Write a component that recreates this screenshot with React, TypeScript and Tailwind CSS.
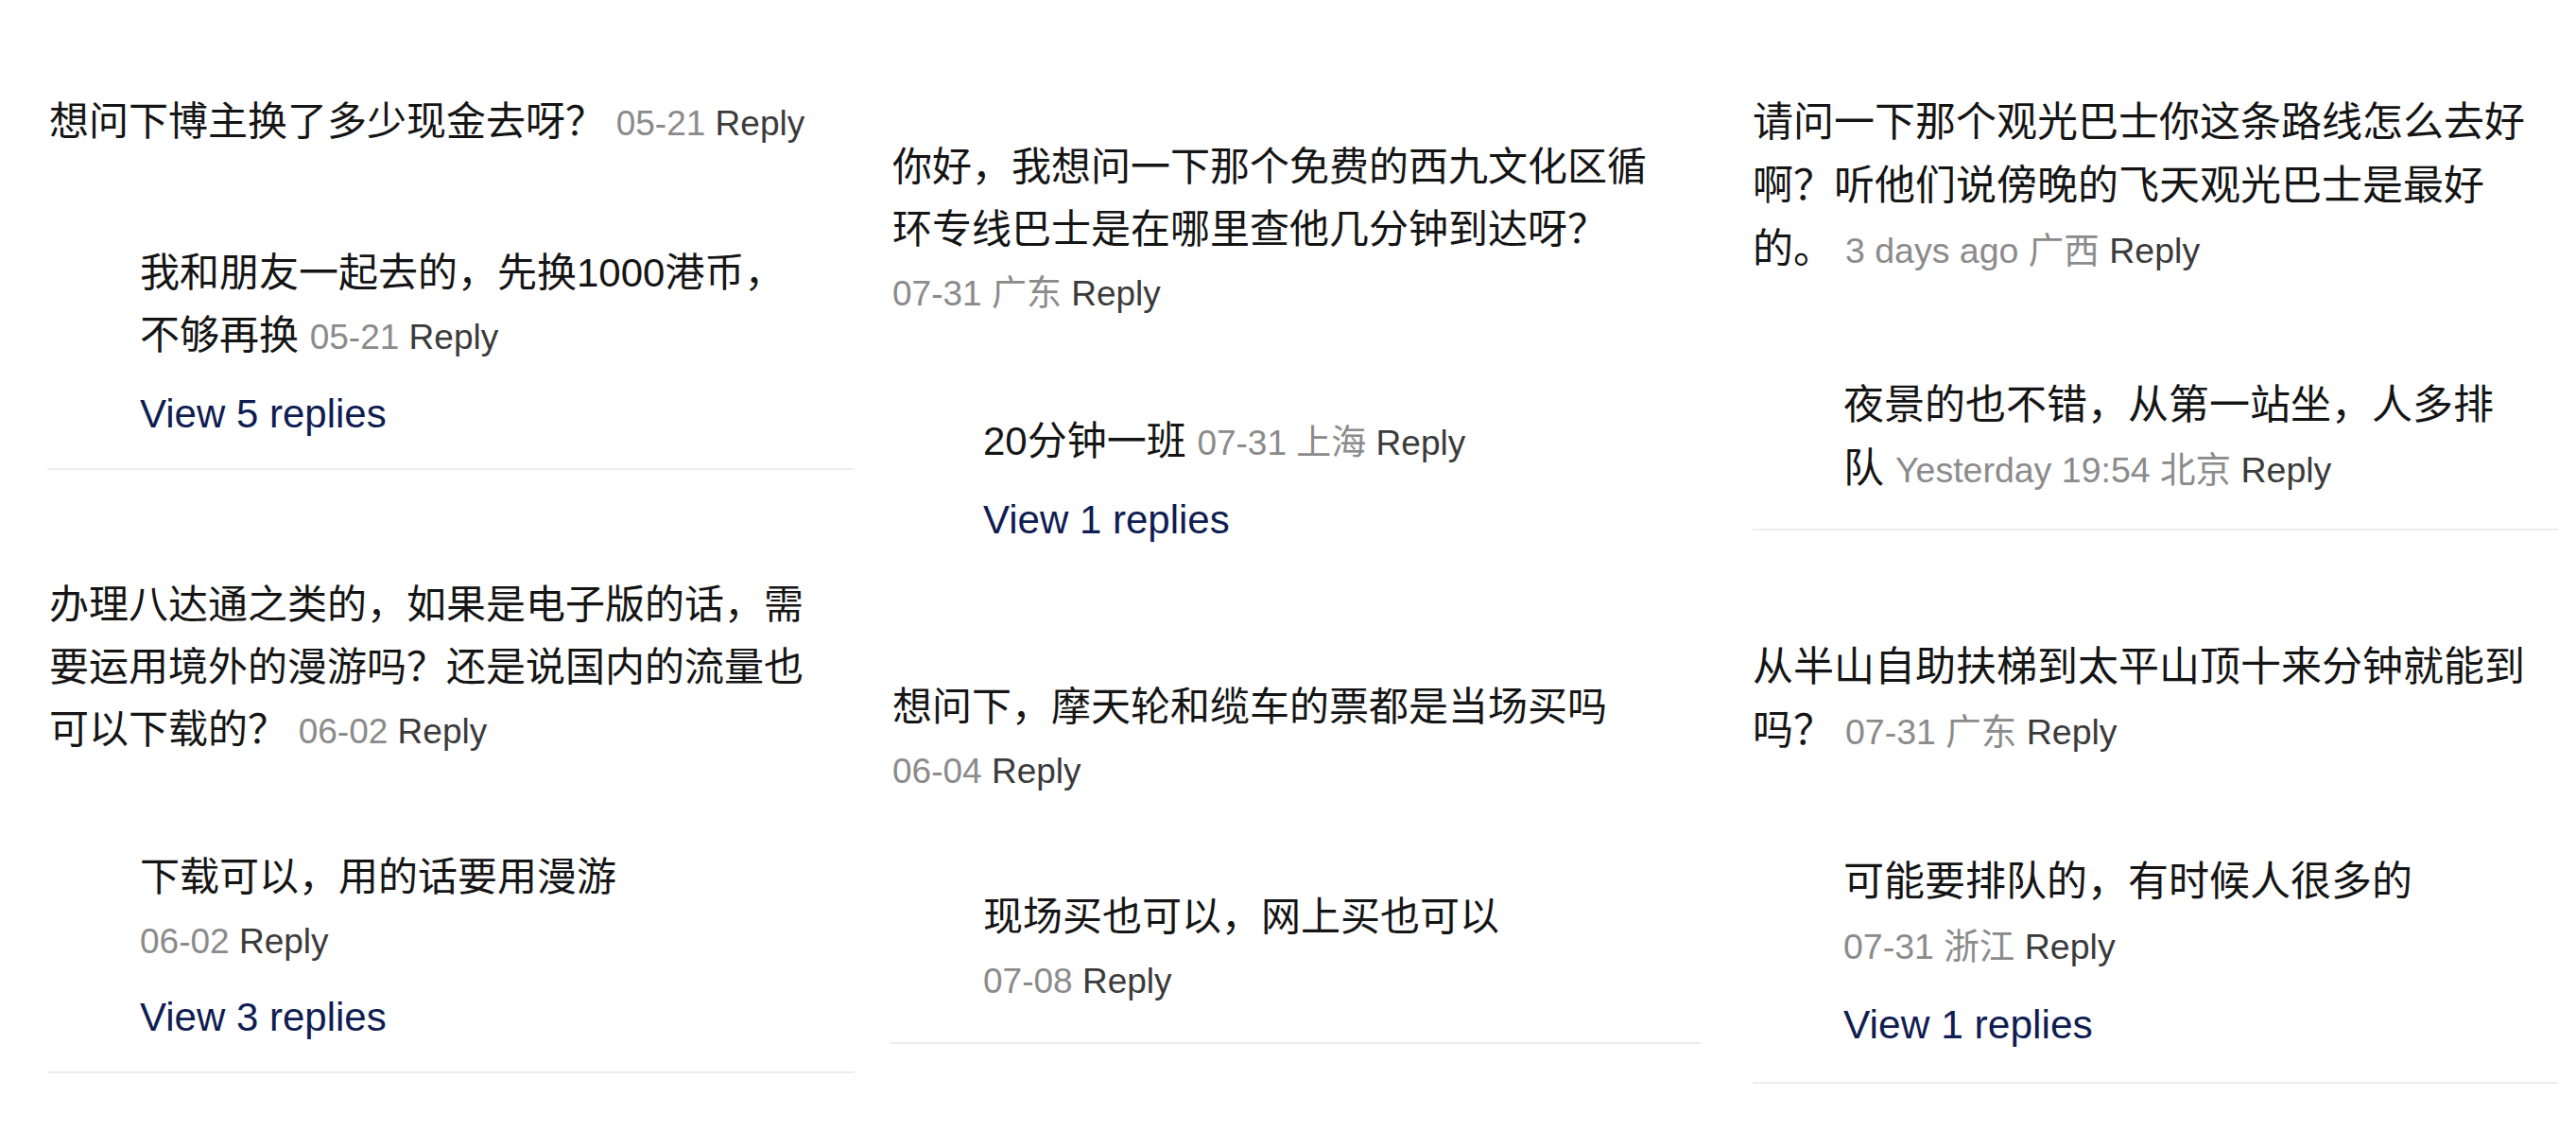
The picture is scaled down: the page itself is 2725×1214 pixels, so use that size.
import { Fragment } from "react";

type Entry = {
  lines: string[];
  date: string;
  loc?: string;
  metaOwnLine?: boolean;
};

type Thread = {
  className: string;
  comment: Entry;
  replyGap: string;
  reply: Entry;
  view?: string;
  viewGap?: string;
};

type Sizes = {
  text: string;
  meta: string;
  view: string;
};

type Column = {
  className: string;
  inset: string;
  sizes: Sizes;
  threads: Thread[];
};

const FONT = {
  fontFamily: '"Liberation Sans", "Noto Sans CJK SC", sans-serif',
};

const baseSizes: Sizes = {
  text: "text-[42px] leading-[66px]",
  meta: "text-[37px]",
  view: "text-[42px] leading-[56px]",
};

const columns: Column[] = [
  {
    className: "w-[854px]",
    inset: "pl-[2px]",
    sizes: baseSizes,
    threads: [
      {
        className: "mt-[96px] pb-[29px] border-b-2 border-[#ededed]",
        comment: { lines: ["想问下博主换了多少现金去呀？"], date: "05-21" },
        replyGap: "mt-[92px]",
        reply: {
          lines: ["我和朋友一起去的，先换1000港币，", "不够再换"],
          date: "05-21",
        },
        view: "View 5 replies",
        viewGap: "mt-[20px]",
      },
      {
        className: "mt-[110px] pb-[29px] border-b-2 border-[#ededed]",
        comment: {
          lines: [
            "办理八达通之类的，如果是电子版的话，需",
            "要运用境外的漫游吗？还是说国内的流量也",
            "可以下载的？",
          ],
          date: "06-02",
        },
        replyGap: "mt-[88px]",
        reply: {
          lines: ["下载可以，用的话要用漫游"],
          date: "06-02",
          metaOwnLine: true,
        },
        view: "View 3 replies",
        viewGap: "mt-[19px]",
      },
    ],
  },
  {
    className: "ml-[37px] w-[858px]",
    inset: "pl-[3px]",
    sizes: baseSizes,
    threads: [
      {
        className: "mt-[144px]",
        comment: {
          lines: [
            "你好，我想问一下那个免费的西九文化区循",
            "环专线巴士是在哪里查他几分钟到达呀？",
          ],
          date: "07-31",
          loc: "广东",
          metaOwnLine: true,
        },
        replyGap: "mt-[90px]",
        reply: { lines: ["20分钟一班"], date: "07-31", loc: "上海" },
        view: "View 1 replies",
        viewGap: "mt-[20px]",
      },
      {
        className: "mt-[137px] pb-[31px] border-b-2 border-[#ededed]",
        comment: {
          lines: ["想问下，摩天轮和缆车的票都是当场买吗"],
          date: "06-04",
          metaOwnLine: true,
        },
        replyGap: "mt-[88px]",
        reply: {
          lines: ["现场买也可以，网上买也可以"],
          date: "07-08",
          metaOwnLine: true,
        },
      },
    ],
  },
  {
    className: "ml-[55px] w-[852px]",
    inset: "pl-0",
    sizes: {
      text: "text-[43px] leading-[67px]",
      meta: "text-[37.5px]",
      view: "text-[42.5px] leading-[56px]",
    },
    threads: [
      {
        className: "mt-[96px] pb-[28px] border-b-2 border-[#ededed]",
        comment: {
          lines: [
            "请问一下那个观光巴士你这条路线怎么去好",
            "啊？听他们说傍晚的飞天观光巴士是最好",
            "的。",
          ],
          date: "3 days ago",
          loc: "广西",
        },
        replyGap: "mt-[96px]",
        reply: {
          lines: ["夜景的也不错，从第一站坐，人多排", "队"],
          date: "Yesterday 19:54",
          loc: "北京",
        },
      },
      {
        className: "mt-[111px] pb-[32px] border-b-2 border-[#ededed]",
        comment: {
          lines: ["从半山自助扶梯到太平山顶十来分钟就能到", "吗？"],
          date: "07-31",
          loc: "广东",
        },
        replyGap: "mt-[91px]",
        reply: {
          lines: ["可能要排队的，有时候人很多的"],
          date: "07-31",
          loc: "浙江",
          metaOwnLine: true,
        },
        view: "View 1 replies",
        viewGap: "mt-[21px]",
      },
    ],
  },
];

const Meta = ({ date, loc, size }: { date: string; loc?: string; size: string }) => (
  <span className={size}>
    <span className="text-[#8b8b8b]">{loc ? `${date} ${loc}` : date}</span>{" "}
    <span className="text-[#3b3b3b]">Reply</span>
  </span>
);

const Text = ({ data, sizes }: { data: Entry; sizes: Sizes }) => (
  <p className={`${sizes.text} text-[#151515] whitespace-nowrap`}>
    {data.lines.map((line, i) => (
      <Fragment key={i}>
        {i > 0 && <br />}
        {line}
      </Fragment>
    ))}
    {data.metaOwnLine ? <br /> : " "}
    <Meta date={data.date} loc={data.loc} size={sizes.meta} />
  </p>
);

const CommentThread = ({
  data,
  inset,
  sizes,
}: {
  data: Thread;
  inset: string;
  sizes: Sizes;
}) => (
  <div className={data.className}>
    <div className={inset}>
      <Text data={data.comment} sizes={sizes} />
      <div className={`ml-[96px] ${data.replyGap}`}>
        <Text data={data.reply} sizes={sizes} />
        {data.view && (
          <div className={`${sizes.view} text-[#101d52] ${data.viewGap}`}>
            {data.view}
          </div>
        )}
      </div>
    </div>
  </div>
);

export default function App() {
  return (
    <div style={FONT} className="flex w-[2725px] h-[1214px] bg-white pl-[50px] overflow-hidden">
      {columns.map((col, i) => (
        <div key={i} className={`flex flex-col shrink-0 ${col.className}`}>
          {col.threads.map((t, j) => (
            <CommentThread key={j} data={t} inset={col.inset} sizes={col.sizes} />
          ))}
        </div>
      ))}
    </div>
  );
}
